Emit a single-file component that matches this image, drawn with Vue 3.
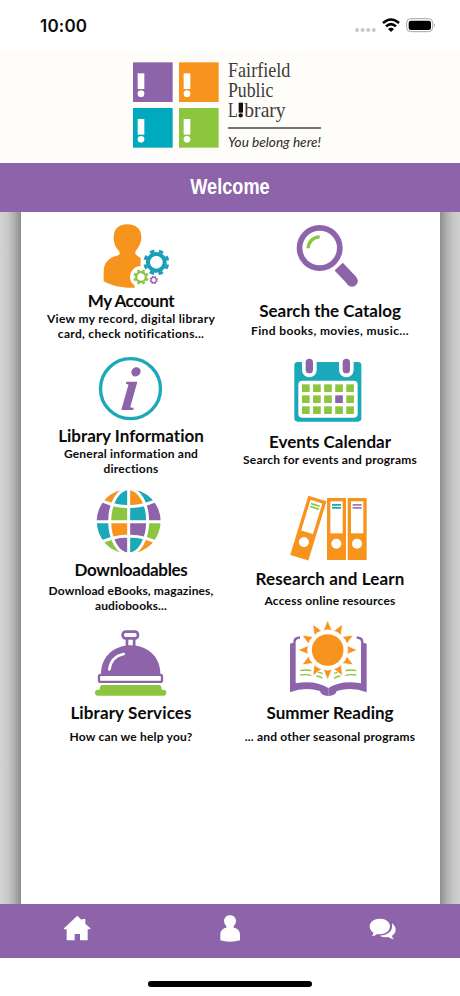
<script setup>
const logoTiles = [
    { x: 39, y: 37, color: '#8d63aa' },
    { x: 177, y: 37, color: '#f7941d' },
    { x: 39, y: 174, color: '#00a9bd' },
    { x: 177, y: 174, color: '#8cc63f' },
]

const tiles = [
    { id: 'account', title: 'My Account', lines: ['View my record, digital library', 'card, check notifications...'], box: '267 156 252 234' },
    { id: 'search', title: 'Search the Catalog', lines: ['Find books, movies, music...'], box: '174 156 252 234' },
    { id: 'info', title: 'Library Information', lines: ['General information and', 'directions'], box: '267 15 252 225' },
    { id: 'events', title: 'Events Calendar', lines: ['Search for events and programs'], box: '174 15 252 234' },
    { id: 'downloads', title: 'Downloadables', lines: ['Download eBooks, magazines,', 'audiobooks...'], box: '267 15 252 222' },
    { id: 'research', title: 'Research and Learn', lines: ['Access online resources'], box: '174 15 252 240' },
    { id: 'services', title: 'Library Services', lines: ['How can we help you?'], box: '267 -3 252 231' },
    { id: 'summer', title: 'Summer Reading', lines: ['... and other seasonal programs'], box: '174 -3 252 231' },
]

const days = Array.from({ length: 15 }, (_, i) => ({
    x: 216 + (i % 5) * 33.2,
    y: 118 + Math.floor(i / 5) * 33,
    color: i === 8 ? '#8d63aa' : '#8cc63f',
}))

const binders = [
    { place: 'translate(235 47) rotate(17)', color: '#8cc63f' },
    { place: 'translate(291 54)', color: '#19a9b8' },
    { place: 'translate(353 54)', color: '#a478b8' },
]

const gears = [
    { x: 469, y: 307, r: 31, w: 24, tooth: 9, hole: 19, color: '#19a0b8' },
    { x: 423, y: 351, r: 18, w: 14, tooth: 6, hole: 11, color: '#8cc63f' },
    { x: 461, y: 360, r: 10, w: 7, tooth: 3.5, hole: 6, color: '#a35fb0' },
]

const rays = Array.from({ length: 12 }, (_, i) => i * 30)
</script>

<template>
    <div class="screen">
        <div class="status">
            <span class="time">10:00</span>
            <svg class="indicators" viewBox="1062 48 252 54">
                <g fill="#c9c9c9">
                    <circle v-for="n in 4" :key="n" :cx="1054.5 + n * 16.7" cy="90" r="6" />
                </g>
                <path d="M1149 69Q1173 48 1197 69M1158 79Q1173 66 1188 79" fill="none" stroke="#000" stroke-width="7.5" />
                <path d="M1164 87Q1173 79 1182 87L1173 96Z" />
                <rect x="1220" y="56" width="78" height="39" rx="12" fill="none" stroke="#a5a5a5" stroke-width="3" />
                <rect x="1226" y="62" width="67" height="28" rx="7" />
                <path d="M1302 70Q1308 76 1302 82Z" fill="#a5a5a5" />
            </svg>
        </div>

        <header class="brand">
            <svg class="logo" viewBox="0 0 660 339">
                <g v-for="tile in logoTiles" :key="tile.color">
                    <rect :x="tile.x" :y="tile.y" width="119" height="119" :fill="tile.color" />
                    <rect :x="tile.x + 14" :y="tile.y + 33" width="20" height="47" fill="#fff" />
                    <circle :cx="tile.x + 24" :cy="tile.y + 94" r="10" fill="#fff" />
                </g>
                <g class="logo-name">
                    <text x="324" y="80" textLength="187" lengthAdjust="spacingAndGlyphs">Fairfield</text>
                    <text x="324" y="140" textLength="136" lengthAdjust="spacingAndGlyphs">Public</text>
                    <text x="324" y="201" textLength="29" lengthAdjust="spacingAndGlyphs">L</text>
                    <text x="373" y="201" textLength="124" lengthAdjust="spacingAndGlyphs">brary</text>
                </g>
                <path d="M356 158h13v30h-13z" fill="#111" />
                <circle cx="362" cy="196" r="6.5" fill="#111" />
                <path d="M324 234H603" stroke="#444" stroke-width="4" />
                <text class="logo-tagline" x="324" y="292" textLength="279" lengthAdjust="spacingAndGlyphs">You belong here!</text>
            </svg>
        </header>

        <div class="title-bar"><h1>Welcome</h1></div>

        <main class="backdrop">
            <div class="panel">
                <a v-for="tile in tiles" :key="tile.id" class="tile" :class="tile.id">
                    <svg class="icon" :viewBox="tile.box">
                        <g v-if="tile.id === 'account'">
                            <path d="M382 193C409 193 424 208 424 232C424 250 416 262 406 275C404 286 414 287 422 294V383H382C350 381 330 374 311 364V335C311 302 333 291 351 287C361 284 360 279 357 273C346 262 341 250 341 232C341 208 355 193 382 193Z" fill="#f7941d" />
                            <circle cx="469" cy="307" r="44" fill="#fff" />
                            <path d="M423 318a33 33 0 0 0-33 33q0 14 9 21q7 4 5 15h30v-69z" fill="#fff" />
                            <g v-for="gear in gears" :key="gear.x" fill="none" :stroke="gear.color" :transform="`rotate(11.25 ${gear.x} ${gear.y})`">
                                <circle :cx="gear.x" :cy="gear.y" :r="(gear.r + gear.hole) / 2" :stroke-width="gear.r - gear.hole" />
                                <circle :cx="gear.x" :cy="gear.y" :r="gear.r + gear.tooth / 2 - 1" :stroke-width="gear.tooth" pathLength="16" stroke-dasharray="1 1" />
                            </g>
                        </g>

                        <g v-else-if="tile.id === 'search'">
                            <circle cx="269" cy="264" r="60.5" fill="none" stroke="#8d63aa" stroke-width="17" />
                            <path d="M234.500 265A34.500 34.500 0 0 1 269 230.500" fill="none" stroke="#8cc63f" stroke-width="10" />
                            <path d="M326 320L366 362" stroke="#8d63aa" stroke-width="34" />
                            <circle cx="366" cy="363" r="17.500" fill="#8d63aa" />
                        </g>

                        <g v-else-if="tile.id === 'info'">
                            <circle cx="391.500" cy="131" r="90" fill="none" stroke="#19a9b8" stroke-width="10" />
                            <text class="info-letter" transform="translate(359 195) skewX(-6)">i</text>
                        </g>

                        <g v-else-if="tile.id === 'events'">
                            <rect x="193" y="51" width="201" height="179" rx="10" fill="#19a9b8" />
                            <path d="M216 45H260V75A22 22 0 0 1 216 75ZM327 45H371V75A22 22 0 0 1 327 75Z" fill="#fff" />
                            <rect x="227" y="41" width="22" height="44" rx="11" fill="#8d63aa" />
                            <rect x="338" y="41" width="22" height="44" rx="11" fill="#8d63aa" />
                            <rect x="205" y="107" width="178" height="111" rx="12" fill="#fff" />
                            <rect v-for="(day, i) in days" :key="i" :x="day.x" :y="day.y" width="23" height="23" :fill="day.color" />
                        </g>

                        <g v-else-if="tile.id === 'downloads'">
                            <clipPath id="globe"><circle cx="386" cy="124" r="96" /></clipPath>
                            <clipPath id="meridian"><ellipse cx="386" cy="124" rx="56" ry="96" /></clipPath>
                            <g clip-path="url(#globe)">
                                <path d="M280 20H386V124H280ZM386 20H492V124H386Z" fill="#8d63aa" />
                                <path d="M280 124H386V230H280Z" fill="#19a9b8" />
                                <path d="M386 124H492V230H386Z" fill="#8cc63f" />
                                <path d="M280 20V50Q333 80 386 80V20Z" fill="#f7941d" />
                                <path d="M386 20V80Q439 80 492 50V20Z" fill="#19a9b8" />
                                <path d="M280 230V198Q333 168 386 168V230Z" fill="#8cc63f" />
                                <path d="M386 230V168Q439 168 492 198V230Z" fill="#f7941d" />
                            </g>
                            <g clip-path="url(#meridian)">
                                <path d="M280 20H386V124H280Z" fill="#8cc63f" />
                                <path d="M386 20H492V124H386Z" fill="#19a9b8" />
                                <path d="M280 124H386V230H280Z" fill="#f7941d" />
                                <path d="M386 124H492V230H386Z" fill="#8d63aa" />
                                <path d="M280 20V50Q333 80 386 80V20Z" fill="#19a9b8" />
                                <path d="M386 20V80Q439 80 492 50V20Z" fill="#f7941d" />
                                <path d="M280 230V198Q333 168 386 168V230Z" fill="#8d63aa" />
                                <path d="M386 230V168Q439 168 492 198V230Z" fill="#19a9b8" />
                            </g>
                            <g fill="none" stroke="#fff" stroke-width="9">
                                <ellipse cx="386" cy="124" rx="57" ry="98" />
                                <path d="M386 20V230M280 125H492M280 50Q333 80 386 80Q439 80 492 50M280 198Q333 168 386 168Q439 168 492 198" />
                            </g>
                        </g>

                        <g v-else-if="tile.id === 'research'">
                            <g v-for="binder in binders" :key="binder.color" :transform="binder.place">
                                <rect width="57" height="186" fill="#f7941d" />
                                <rect x="10" y="10" width="37" height="96" fill="#fff" />
                                <path d="M15 20.500H42M15 29.500H42" :stroke="binder.color" stroke-width="5" />
                                <circle cx="28" cy="137" r="15" fill="#fff" />
                            </g>
                        </g>

                        <g v-else-if="tile.id === 'services'">
                            <g fill="none" stroke="#8d63aa" stroke-width="8">
                                <path d="M381 57V80M402.500 57V80" />
                                <rect x="368" y="35" width="46" height="20" rx="9" />
                            </g>
                            <path d="M303 162C303 107 345 76 392 76S481 107 481 162Z" fill="#8d63aa" />
                            <path d="M328 148Q333 110 371 102" fill="none" stroke="#fff" stroke-width="8" stroke-linecap="round" />
                            <rect x="297" y="164.500" width="189" height="21" rx="5" fill="#fff" stroke="#8d63aa" stroke-width="7" />
                            <path d="M306 195H478Q485 196 485 209H490A9 9 0 0 1 490 227H294A9 9 0 0 1 294 209H299Q299 196 306 195Z" fill="#8cc63f" />
                        </g>

                        <g v-else>
                            <g v-for="side in ['', 'matrix(-1 0 0 1 590 0)']" :key="side" :transform="side">
                                <path d="M180 72Q182 69 190 68V62Q192 50 210 49V56Q197 57 197 66V190Q255 179 295 204V228Q272 226 270 213Q225 199 180 217Z" fill="#8d63aa" />
                                <path d="M211 152Q228 148 244 152M211 165Q228 162 244 166M260 155L278 160M259 168Q270 169 278 175" fill="none" stroke="#8cc63f" stroke-width="4" />
                            </g>
                            <circle cx="293" cy="90" r="58" fill="#fff" />
                            <path v-for="angle in rays" :key="angle" d="M293 1L306 32Q293 27 280 32Z" fill="#f7941d" stroke="#fff" stroke-width="2" :transform="`rotate(${angle} 293 90)`" />
                            <circle cx="293" cy="90" r="47.500" fill="#f7941d" />
                        </g>
                    </svg>
                    <h2>{{ tile.title }}</h2>
                    <p>
                        <span v-for="line in tile.lines" :key="line">{{ line }}</span>
                    </p>
                </a>
            </div>
        </main>

        <nav class="tabs">
            <a>
                <svg viewBox="185 41 90 162">
                    <path d="M231 76L245 90V86H255V100L270 114V117H262V150H239V131H223V150H199V117H191V114Z" />
                </svg>
            </a>
            <a>
                <svg viewBox="645 41 90 162">
                    <path d="M690 75C702 75 708 83 708 93Q707 103 701 108V112C713 114 720 120 720 134V150Q707 154 690 154T661 150V134C661 120 668 114 679 112V108Q673 103 672 93C672 83 678 75 690 75Z" />
                </svg>
            </a>
            <a>
                <svg viewBox="1105 41 90 162">
                    <path d="M1177 99Q1188 107 1188 119Q1188 129 1177 136Q1177 142 1183 147Q1172 146 1166 140Q1150 142 1140 136Q1172 134 1177 113Z" />
                    <path d="M1141 85C1159 85 1171 95 1171 108S1159 132 1141 132L1133 131Q1127 137 1116 138Q1122 132 1121 127Q1110 120 1110 108C1110 95 1123 85 1141 85Z" />
                </svg>
            </a>
        </nav>

        <div class="home-indicator"></div>
    </div>
</template>

<style>
body {
    margin: 0;
    background: #fff;
}
</style>

<style scoped>
.screen {
    display: flex;
    flex-direction: column;
    width: 460px;
    height: 996px;
    overflow: hidden;
    background: #fff;
    font-family: Lato, "Liberation Sans", sans-serif;
    font-variant-ligatures: none;
    color: #0b0b0b;
}
.status {
    display: flex;
    justify-content: space-between;
    box-sizing: border-box;
    height: 50px;
    padding: 16px 22px 0 40px;
}
.time {
    font: 600 17px/20px Inter, sans-serif;
    letter-spacing: 0.2px;
}
.indicators {
    width: 84px;
    height: 18px;
}
.brand {
    display: flex;
    justify-content: center;
    height: 113px;
    background: #fffdf9;
}
.logo {
    width: 220px;
    height: 113px;
}
.logo-name {
    font-family: "Liberation Serif", serif;
    font-size: 63px;
    fill: #3a3a3a;
}
.logo-tagline {
    font-family: Lato, sans-serif;
    font-size: 40px;
    font-style: italic;
    fill: #2c2c2c;
}
.title-bar {
    display: flex;
    justify-content: center;
    height: 49px;
    background: #8d63aa;
}
.title-bar h1 {
    margin: 0;
    font: bold 21.500px/48px "Liberation Sans", sans-serif;
    color: #fff;
    transform: scaleX(0.845);
}
.backdrop {
    height: 691.500px;
    padding: 0 20.500px 0 21px;
    background: linear-gradient(90deg, #d3d3d3 0, #c9c9c9 8px, #acacac 15px, #8e8e8e 21px, #8e8e8e 440px, #adadad 446px, #c6c6c6 453px, #d0d0d0 460px);
}
.panel {
    display: grid;
    grid-template-columns: 200px 198px;
    grid-template-rows: 138px 135px 134px 134px;
    box-sizing: border-box;
    height: 100%;
    padding-left: 10px;
    background: #fff;
}
.tile {
    display: flex;
    flex-direction: column;
    align-items: center;
}
.icon {
    flex-shrink: 0;
    width: 84px;
    height: 78px;
}
.info .icon {
    height: 75px;
}
.downloads .icon {
    height: 74px;
}
.research .icon {
    height: 80px;
}
.services .icon,
.summer .icon {
    height: 77px;
}
.info-letter {
    font: italic bold 185px "Liberation Serif", serif;
    fill: #8d63aa;
}
h2 {
    margin: 1px 0 -1px;
    font-size: 17px;
    font-weight: 700;
    line-height: 20px;
    white-space: nowrap;
}
p {
    margin: 1px 0 0;
    font-size: 12px;
    font-weight: 700;
    line-height: 15px;
    letter-spacing: 0.2px;
    text-align: center;
    white-space: nowrap;
}
p span {
    display: block;
}
.account h2 {
    letter-spacing: -0.45px;
}
.account p {
    letter-spacing: 0.3px;
}
.search h2 {
    margin: 11px 0 1px;
}
.search p {
    letter-spacing: 0.38px;
}
.events h2 {
    margin-top: 4px;
}
.downloads h2 {
    margin-bottom: 2px;
    letter-spacing: -0.3px;
}
.downloads p {
    letter-spacing: 0.12px;
}
.research h2 {
    margin: 4px 0 3px;
    letter-spacing: 0.12px;
}
.services h2,
.summer h2 {
    margin: 7px 0 5px;
}
.services h2 {
    letter-spacing: 0.12px;
}
.tabs {
    display: flex;
    height: 54px;
    background: #8d63aa;
}
.tabs a {
    flex: 1;
    display: flex;
    justify-content: center;
}
.tabs svg {
    width: 30px;
    height: 54px;
    fill: #fff;
}
.home-indicator {
    width: 164px;
    height: 6px;
    margin: 23.500px auto 0;
    border-radius: 3px;
    background: #000;
}
</style>
